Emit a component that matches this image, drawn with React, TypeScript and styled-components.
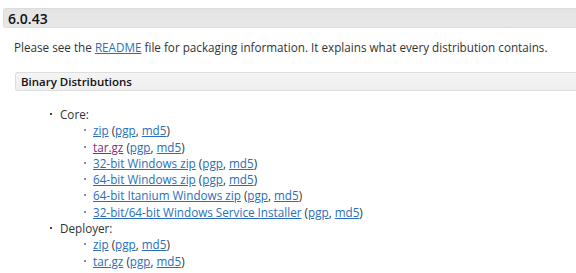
import React from "react";
import styled, { createGlobalStyle } from "styled-components";

const GlobalStyle = createGlobalStyle`
  html, body {
    margin: 0;
    padding: 0;
    background: #ffffff;
  }
  body {
    font-family: "Open Sans", "Liberation Sans", sans-serif;
    color: #333333;
  }
`;

interface FileLink {
    label: string;
    visited?: boolean;
}

interface Group {
    name: string;
    files: FileLink[];
}

const groups: Group[] = [
    {
        name: "Core:",
        files: [
            {label: "zip"},
            {label: "tar.gz", visited: true},
            {label: "32-bit Windows zip"},
            {label: "64-bit Windows zip"},
            {label: "64-bit Itanium Windows zip"},
            {label: "32-bit/64-bit Windows Service Installer"},
        ],
    },
    {
        name: "Deployer:",
        files: [
            {label: "zip"},
            {label: "tar.gz"},
        ],
    },
];

const App: React.FC = () => {
    return (
        <Page>
            <GlobalStyle/>
            <VersionBar>6.0.43</VersionBar>
            <Intro>
                Please see the <Link href="#">README</Link> file for packaging information. It explains what every
                distribution contains.
            </Intro>
            <Section>
                <SectionBar>Binary Distributions</SectionBar>
                <GroupList>
                    {groups.map((group) => (
                        <GroupItem key={group.name}>
                            {group.name}
                            <FileList>
                                {group.files.map((file) => (
                                    <FileItem key={file.label}>
                                        <Link href="#" $visited={file.visited}>{file.label}</Link>
                                        {" ("}
                                        <Link href="#">pgp</Link>
                                        {", "}
                                        <Link href="#">md5</Link>
                                        {")"}
                                    </FileItem>
                                ))}
                            </FileList>
                        </GroupItem>
                    ))}
                </GroupList>
            </Section>
        </Page>
    );
};

export default App;

const Page = styled.main`
    width: 576px;
    height: 273px;
    overflow: hidden;
    padding-top: 8px;
    padding-left: 3px;
    box-sizing: border-box;
    font-size: 11.7px;
`
const VersionBar = styled.h3`
    margin: 0;
    height: 20px;
    box-sizing: border-box;
    padding: 0 4px;
    font-size: 14px;
    font-weight: 600;
    line-height: 19px;
    color: #111111;
    background: linear-gradient(#e4e4e4, #e8e8e8);
    border: 1px solid #dcdcdc;
    border-right: none;
    border-radius: 3px 0 0 3px;
`
const Intro = styled.p`
    margin: 10px 0 0 11px;
    line-height: 18px;
    white-space: nowrap;
`
const Section = styled.section`
    margin: 16px 0 0 12px;
`
const SectionBar = styled.h4`
    margin: 0;
    height: 19px;
    box-sizing: border-box;
    padding: 0 5px;
    font-size: 11.5px;
    font-weight: 600;
    line-height: 17px;
    color: #111111;
    background: linear-gradient(#f4f4f4, #efefef);
    border: 1px solid #dddddd;
    border-right: none;
    border-radius: 3px 0 0 3px;
`
const GroupList = styled.ul`
    margin: 15px 0 0 0;
    padding-left: 45px;
    list-style: none;
`
const GroupItem = styled.li`
    position: relative;
    line-height: 16.3px;

    &::before {
        content: "";
        position: absolute;
        left: -10px;
        top: 7px;
        width: 2px;
        height: 2px;
        background: #444444;
    }
`
const FileList = styled.ul`
    margin: 0;
    padding-left: 33px;
    list-style: none;
`
const FileItem = styled.li`
    position: relative;
    line-height: 16.3px;

    &::before {
        content: "";
        position: absolute;
        left: -9px;
        top: 7px;
        width: 2px;
        height: 2px;
        background: #8a8a9a;
    }
`
const Link = styled.a<{ $visited?: boolean }>`
    color: ${({$visited}) => ($visited ? "#8a2a7c" : "#2a6ebb")};
    text-decoration: underline;
`
